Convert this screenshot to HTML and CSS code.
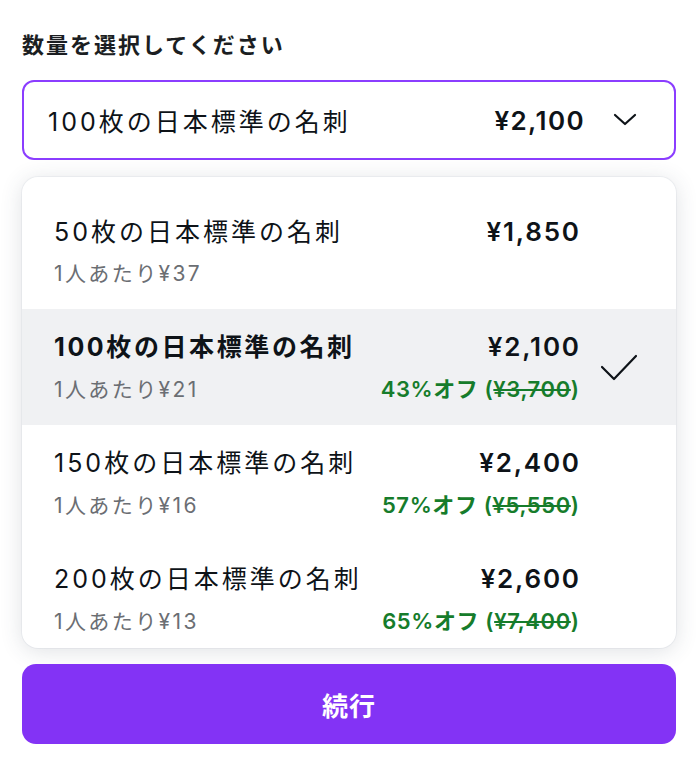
FILE: index.html
```html
<!DOCTYPE html>
<html lang="ja">
<head>
<meta charset="utf-8">
<link rel="stylesheet" href="styles.css">
</head>
<body>
<div class="page">
  <div class="label">数量を選択してください</div>
  <div class="select">
    <span class="select-name">100枚の日本標準の名刺</span>
    <span class="select-price">¥2,100</span>
    <svg class="chev" width="24" height="24" viewBox="0 0 24 24"><path d="M2 7 L12 16 L22 7" fill="none" stroke="#0e1318" stroke-width="2.2" stroke-linecap="round" stroke-linejoin="round"/></svg>
  </div>
  <div class="menu">
    <div class="list">
      <div class="row">
        <div class="info">
          <div class="line"><span class="name">50枚の日本標準の名刺</span><span class="price">¥1,850</span></div>
          <div class="line"><span class="sub">1人あたり¥37</span></div>
        </div>
        <div class="check"></div>
      </div>
      <div class="row selected">
        <div class="info">
          <div class="line"><span class="name">100枚の日本標準の名刺</span><span class="price">¥2,100</span></div>
          <div class="line"><span class="sub">1人あたり¥21</span><span class="off">43%オフ (<s>¥3,700</s>)</span></div>
        </div>
        <div class="check"><svg width="38" height="28" viewBox="0 0 38 28"><path d="M2 14 L14 26 L36 3" fill="none" stroke="#0e1318" stroke-width="2.2" stroke-linecap="round" stroke-linejoin="round"/></svg></div>
      </div>
      <div class="row">
        <div class="info">
          <div class="line"><span class="name">150枚の日本標準の名刺</span><span class="price">¥2,400</span></div>
          <div class="line"><span class="sub">1人あたり¥16</span><span class="off">57%オフ (<s>¥5,550</s>)</span></div>
        </div>
        <div class="check"></div>
      </div>
      <div class="row">
        <div class="info">
          <div class="line"><span class="name">200枚の日本標準の名刺</span><span class="price">¥2,600</span></div>
          <div class="line"><span class="sub">1人あたり¥13</span><span class="off">65%オフ (<s>¥7,400</s>)</span></div>
        </div>
        <div class="check"></div>
      </div>
    </div>
  </div>
  <button class="btn">続行</button>
</div>
</body>
</html>
```
FILE: styles.css
```css
* { box-sizing: border-box; }
html, body { margin: 0; padding: 0; background: #fff; }
body {
  font-family: "Inter", "Noto Sans CJK JP", sans-serif;
  color: #0e1318;
}
.page {
  padding: 27px 20px 0 22px;
  display: flex;
  flex-direction: column;
}
.label {
  font-size: 22px;
  font-weight: 700;
  letter-spacing: 2px;
  line-height: 36px;
  color: #1b1e22;
}
.select {
  margin-top: 17px;
  height: 80px;
  border: 2px solid #8b3dff;
  border-radius: 12px;
  display: flex;
  align-items: center;
  padding: 0 37px 0 24px;
}
.select-name {
  font-size: 25px;
  letter-spacing: 3px;
  flex: 1;
  font-weight: 400;
}
.select-price {
  font-size: 26px;
  font-weight: 600;
  letter-spacing: 1.4px;
}
.chev { margin-left: 28px; }
.menu {
  margin-top: 17px;
  height: 471px;
  border-radius: 16px;
  background: #fff;
  box-shadow: 0 0 0 1px rgba(64,87,109,0.05), 0 3px 22px rgba(53,71,90,0.16);
  overflow: hidden;
  padding-top: 16px;
}
.list { display: flex; flex-direction: column; }
.row {
  height: 116px;
  flex: none;
  display: flex;
  align-items: center;
  padding: 0 24px 0 32px;
}
.row.selected { background: #f0f1f3; }
.info {
  flex: 1;
  display: flex;
  flex-direction: column;
  gap: 11px;
  padding-top: 0;
}
.line {
  display: flex;
  justify-content: space-between;
  align-items: baseline;
}
.name { font-size: 25px; letter-spacing: 3px; line-height: 34px; }
.selected .name { font-weight: 700; letter-spacing: 2.6px; }
.price { font-size: 26px; font-weight: 600; letter-spacing: 1.8px; line-height: 34px; margin-right: -1.8px; }
.sub { font-size: 21px; letter-spacing: 2.4px; color: #6b6e73; line-height: 28px; }
.off { font-size: 22px; color: #167c2b; font-weight: 600; letter-spacing: 0.6px; line-height: 28px; margin-right: -0.6px; }
.off s { text-decoration-thickness: 2px; }
.check {
  width: 73px;
  flex: none;
  display: flex;
  justify-content: flex-end;
  padding-right: 14px;
}
.btn {
  margin-top: 16px;
  height: 80px;
  border: none;
  border-radius: 14px;
  background: #8333f5;
  color: #fff;
  font-family: "Inter", "Noto Sans CJK JP", sans-serif;
  font-size: 26px;
  letter-spacing: 1px;
  font-weight: 700;
}
```
